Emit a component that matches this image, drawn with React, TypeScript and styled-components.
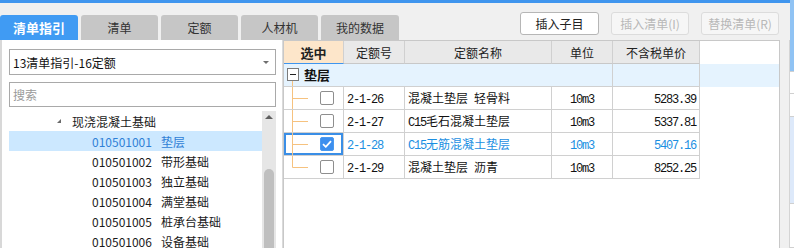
import React from "react";
import styled, { createGlobalStyle } from "styled-components";

const GlobalStyle = createGlobalStyle`
  html, body { margin: 0; padding: 0; }
  body {
    background: #f0f0f0;
    font-family: "Noto Sans CJK SC", "Noto Sans", sans-serif;
    font-size: 12px;
    color: #1a1a1a;
  }
`;

const Screen = styled.div`
  width: 794px;
  height: 248px;
  overflow: hidden;
  display: flex;
  background: #f0f0f0;
`;

const Workspace = styled.div`
  width: 790px;
  display: flex;
  flex-direction: column;
`;

const TopStripe = styled.div`
  height: 3px;
  background: #3f95ee;
`;

const HeaderRow = styled.div`
  height: 37px;
  display: flex;
  padding-right: 11px;
`;

const Tabs = styled.div`
  display: flex;
  gap: 3px;
  align-self: flex-end;
`;

const Tab = styled.div<{ $active?: boolean; $w: number }>`
  width: ${(p) => p.$w}px;
  height: 25px;
  border-radius: 3px 3px 0 0;
  display: flex;
  align-items: center;
  justify-content: center;
  background: ${(p) => (p.$active ? "#409bf3" : "#c6c6c6")};
  color: ${(p) => (p.$active ? "#fff" : "#333")};
  font-weight: ${(p) => (p.$active ? 700 : 400)};
  font-size: ${(p) => (p.$active ? 13 : 12)}px;
  line-height: 1;
`;

const Toolbar = styled.div`
  margin-left: auto;
  margin-top: 9px;
  display: flex;
  gap: 12px;
`;

const ToolButton = styled.div<{ $disabled?: boolean; $w: number }>`
  width: ${(p) => p.$w}px;
  height: 23px;
  box-sizing: border-box;
  border: 1px solid ${(p) => (p.$disabled ? "#dcdcdc" : "#b6b6b6")};
  border-radius: 3px;
  background: ${(p) => (p.$disabled ? "#f6f6f6" : "#fff")};
  color: ${(p) => (p.$disabled ? "#b8b8b8" : "#222")};
  display: flex;
  align-items: center;
  justify-content: center;
  font-size: 12px;
`;

const Body = styled.div`
  flex: 1;
  display: flex;
  min-height: 0;
`;

const LeftPanel = styled.div`
  width: 283px;
  box-sizing: border-box;
  background: #fff;
  border-left: 2px solid #d8d8d8;
  border-right: 1px solid #dadada;
  padding: 9px 6px 0 7px;
  display: flex;
  flex-direction: column;
`;

const Select = styled.div`
  height: 26px;
  box-sizing: border-box;
  border: 1px solid #a9a9a9;
  display: flex;
  align-items: center;
  padding: 0 6px 0 3px;
  font-size: 12px;
  color: #111;
`;

const SelectText = styled.span`
  flex: 1;
`;

const Caret = styled.span`
  width: 0;
  height: 0;
  border-left: 3px solid transparent;
  border-right: 3px solid transparent;
  border-top: 3px solid #6e6e6e;
`;

const Search = styled.input`
  margin-top: 7px;
  height: 25px;
  box-sizing: border-box;
  border: 1px solid #a9a9a9;
  padding: 0 3px;
  font-family: inherit;
  font-size: 12px;
  outline: none;
  &::placeholder { color: #9a9a9a; }
`;

const TreeArea = styled.div`
  margin-top: 4px;
  flex: 1;
  display: flex;
  min-height: 0;
`;

const TreeList = styled.div`
  flex: 1;
`;

const TreeRow = styled.div<{ $selected?: boolean; $indent: number }>`
  height: 20px;
  display: flex;
  align-items: center;
  padding-left: ${(p) => p.$indent}px;
  background: ${(p) => (p.$selected ? "#cce8ff" : "transparent")};
  color: ${(p) => (p.$selected ? "#2f80d6" : "#1a1a1a")};
  white-space: nowrap;
`;

const Expander = styled.span`
  width: 0;
  height: 0;
  border-left: 4px solid transparent;
  border-bottom: 4px solid #6a6a6a;
  margin-right: 11px;
`;

const Code = styled.span`
  margin-right: 9px;
`;

const ScrollTrack = styled.div`
  width: 14px;
  background: #e6e6e6;
  display: flex;
  flex-direction: column;
  align-items: center;
`;

const ScrollArrow = styled.span`
  margin-top: 4px;
  width: 0;
  height: 0;
  border-left: 4px solid transparent;
  border-right: 4px solid transparent;
  border-bottom: 4px solid #5f5f5f;
`;

const ScrollThumb = styled.div`
  margin-top: 50px;
  width: 10px;
  flex: 1;
  background: #bfbfbf;
  border-radius: 5px 5px 0 0;
`;

const GridPanel = styled.div`
  width: 497px;
  box-sizing: border-box;
  background: #fff;
  border: 1px solid #c8c8c8;
  border-bottom: none;
`;

const GridRow = styled.div<{ $height?: number; $bg?: string }>`
  display: flex;
  height: ${(p) => p.$height ?? 23}px;
  background: ${(p) => p.$bg ?? "transparent"};
`;

const HeadCell = styled.div<{ $w: number; $picked?: boolean }>`
  width: ${(p) => p.$w}px;
  box-sizing: border-box;
  border-right: 1px solid #d0d0d0;
  border-bottom: 1px solid ${(p) => (p.$picked ? "#3f95ee" : "#c8c8c8")};
  background: ${(p) => (p.$picked ? "#fde6ca" : "#e9e9e9")};
  font-weight: ${(p) => (p.$picked ? 700 : 400)};
  font-size: ${(p) => (p.$picked ? 13 : 12)}px;
  color: #222;
  display: flex;
  align-items: center;
  justify-content: center;
`;

const Cell = styled.div<{ $w: number; $align?: string; $focus?: boolean; $blue?: boolean }>`
  width: ${(p) => p.$w}px;
  box-sizing: border-box;
  border-right: 1px solid #d0d0d0;
  border-bottom: 1px solid #d0d0d0;
  display: flex;
  align-items: center;
  justify-content: ${(p) => p.$align ?? "flex-start"};
  padding: 0 3px;
  color: ${(p) => (p.$blue ? "#1b8fe2" : "#111")};
  box-shadow: ${(p) => (p.$focus ? "inset 0 0 0 2px #3a8ee6" : "none")};
  white-space: pre;
`;

const PickCell = styled(Cell)`
  padding: 0;
`;

const GroupCell = styled(Cell)`
  padding: 0 0 0 3px;
  align-items: flex-start;
  font-weight: 700;
  font-size: 13px;
`;

const GroupLabel = styled.span`
  margin-left: 5px;
  line-height: 22px;
`;

const CellText = styled.span`
  white-space: pre;
`;

const Latin = styled.span`
  font-family: "Liberation Mono", monospace;
  letter-spacing: -1.2px;
`;

const Box = styled.span<{ $checked?: boolean }>`
  margin-left: 12px;
  width: 14px;
  height: 14px;
  box-sizing: border-box;
  border: 1px solid ${(p) => (p.$checked ? "#4a9af0" : "#8e8e8e")};
  border-radius: 2px;
  background: ${(p) => (p.$checked ? "#3d8fee" : "#fff")};
  display: flex;
  align-items: center;
  justify-content: center;
`;

const Gutter = styled.div`
  width: 10px;
  border-right: 1px solid #d4d4d4;
  box-sizing: border-box;
`;

const EdgeStrip = styled.div`
  width: 4px;
  display: flex;
  flex-direction: column;
`;

const Band = styled.div<{ $h: number; $bg: string }>`
  height: ${(p) => p.$h}px;
  background: ${(p) => p.$bg};
  border-bottom: 1px solid #d0d0d0;
`;

const cols = [60, 61, 147, 61, 87];

const Mixed = ({ text }: { text: string }) => (
  <CellText>
    {text.split(/([\x00-\x7f]+)/).map((part, i) =>
      /^[\x00-\x7f]+$/.test(part) ? <Latin key={i}>{part}</Latin> : part
    )}
  </CellText>
);

const treeItems = [
  ["010501001", "垫层"],
  ["010501002", "带形基础"],
  ["010501003", "独立基础"],
  ["010501004", "满堂基础"],
  ["010501005", "桩承台基础"],
  ["010501006", "设备基础"],
];

const rows = [
  { code: "2-1-26", name: "混凝土垫层 轻骨料", unit: "10m3", price: "5283.39" },
  { code: "2-1-27", name: "C15毛石混凝土垫层", unit: "10m3", price: "5337.81" },
  { code: "2-1-28", name: "C15无筋混凝土垫层", unit: "10m3", price: "5407.16", checked: true },
  { code: "2-1-29", name: "混凝土垫层 沥青", unit: "10m3", price: "8252.25", last: true },
];

const Guide = ({ last }: { last?: boolean }) => (
  <svg width="24" height="22" style={{ flexShrink: 0 }}>
    <line x1="8.5" y1="0" x2="8.5" y2={last ? 11.5 : 22} stroke="#f6c27f" />
    <line x1="8.5" y1="11.5" x2="24" y2="11.5" stroke="#f6c27f" />
  </svg>
);

const GroupToggle = () => (
  <svg width="12" height="22" style={{ flexShrink: 0 }}>
    <rect x="0.5" y="4.5" width="11" height="12" fill="#fff" stroke="#7a7a7a" />
    <line x1="3" y1="10.5" x2="9" y2="10.5" stroke="#222" />
    <line x1="5.5" y1="17" x2="5.5" y2="22" stroke="#f6c27f" />
  </svg>
);

const Tick = () => (
  <svg width="10" height="8" viewBox="0 0 10 8">
    <path d="M1 4.2 L3.8 6.8 L9 1.2" fill="none" stroke="#fff" strokeWidth="1.8" />
  </svg>
);

export default function App() {
  return (
    <Screen>
      <GlobalStyle />
      <Workspace>
        <TopStripe />
        <HeaderRow>
          <Tabs>
            <Tab $w={78} $active>清单指引</Tab>
            <Tab $w={77}>清单</Tab>
            <Tab $w={77}>定额</Tab>
            <Tab $w={77}>人材机</Tab>
            <Tab $w={78}>我的数据</Tab>
          </Tabs>
          <Toolbar>
            <ToolButton $w={79}>插入子目</ToolButton>
            <ToolButton $w={78} $disabled>插入清单(I)</ToolButton>
            <ToolButton $w={78} $disabled>替换清单(R)</ToolButton>
          </Toolbar>
        </HeaderRow>
        <Body>
          <LeftPanel>
            <Select>
              <SelectText>13清单指引-16定额</SelectText>
              <Caret />
            </Select>
            <Search placeholder="搜索" />
            <TreeArea>
              <TreeList>
                <TreeRow $indent={48}>
                  <Expander />
                  现浇混凝土基础
                </TreeRow>
                {treeItems.map(([code, name], i) => (
                  <TreeRow key={code} $indent={83} $selected={i === 0}>
                    <Code>{code}</Code>
                    {name}
                  </TreeRow>
                ))}
              </TreeList>
              <ScrollTrack>
                <ScrollArrow />
                <ScrollThumb />
              </ScrollTrack>
            </TreeArea>
          </LeftPanel>
          <GridPanel>
            <GridRow>
              <HeadCell $w={cols[0]} $picked>选中</HeadCell>
              <HeadCell $w={cols[1]}>定额号</HeadCell>
              <HeadCell $w={cols[2]}>定额名称</HeadCell>
              <HeadCell $w={cols[3]}>单位</HeadCell>
              <HeadCell $w={cols[4]}>不含税单价</HeadCell>
            </GridRow>
            <GridRow $bg="#e5f3fe">
              <GroupCell $w={cols[0] + cols[1] + cols[2] + cols[3]}>
                <GroupToggle />
                <GroupLabel>垫层</GroupLabel>
              </GroupCell>
              <Cell $w={cols[4]} />
            </GridRow>
            {rows.map((r) => (
              <GridRow key={r.code}>
                <PickCell $w={cols[0]} $focus={r.checked}>
                  <Guide last={r.last} />
                  <Box $checked={r.checked}>{r.checked && <Tick />}</Box>
                </PickCell>
                <Cell $w={cols[1]} $blue={r.checked}><Mixed text={r.code} /></Cell>
                <Cell $w={cols[2]} $blue={r.checked}><Mixed text={r.name} /></Cell>
                <Cell $w={cols[3]} $blue={r.checked} $align="center"><Mixed text={r.unit} /></Cell>
                <Cell $w={cols[4]} $blue={r.checked} $align="flex-end"><Mixed text={r.price} /></Cell>
              </GridRow>
            ))}
          </GridPanel>
          <Gutter />
        </Body>
      </Workspace>
      <EdgeStrip>
        <Band $h={72} $bg="#90c3f4" />
        <Band $h={22} $bg="#ffffff" />
        <Band $h={22} $bg="#ffffff" />
        <Band $h={88} $bg="#dde9fa" />
        <Band $h={44} $bg="#ffffff" />
      </EdgeStrip>
    </Screen>
  );
}
